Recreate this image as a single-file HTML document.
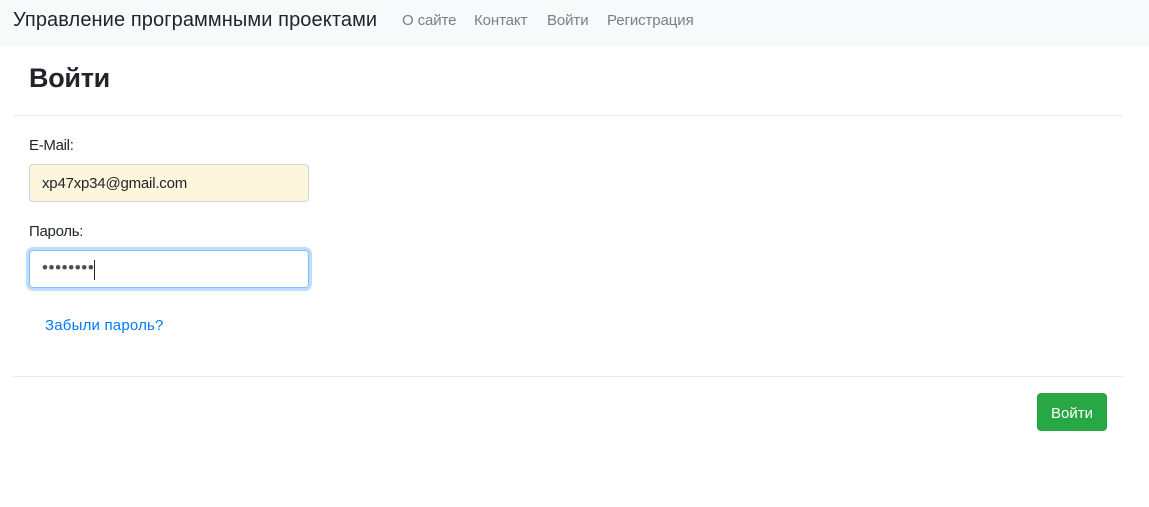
<!DOCTYPE html>
<html><head><meta charset="utf-8"><style>
body{margin:0;width:1149px;height:507px;background:#fff;font-family:"Liberation Sans","DejaVu Sans",sans-serif;position:relative;overflow:hidden;color:#212529}
.nav{position:absolute;left:0;top:0;width:1149px;height:46px;background:#f8f9fa}
.t{position:absolute;white-space:nowrap}
.brand{left:13px;top:9px;font-size:20px;letter-spacing:0.1px;color:#212529}
.nl{top:12px;font-size:15px;color:#7a7f84;letter-spacing:-0.1px}
.hr{position:absolute;left:13px;width:1110px;height:1px;background:#e9ecef}
.in{position:absolute;left:29px;width:278px;height:36px;border:1px solid #ced4da;border-radius:4px;box-sizing:border-box}
</style></head><body>
<div class="nav"></div>
<div class="t brand">Управление программными проектами</div>
<div class="t nl" style="left:402px">О сайте</div>
<div class="t nl" style="left:474px">Контакт</div>
<div class="t nl" style="left:547px">Войти</div>
<div class="t nl" style="left:607px">Регистрация</div>
<div class="t" style="left:29px;top:63px;font-size:27px;font-weight:600;letter-spacing:-0.3px">Войти</div>
<div class="hr" style="top:115px"></div>
<div class="t" style="left:29px;top:137px;font-size:15px;letter-spacing:-0.3px">E-Mail:</div>
<div class="in" style="top:164px;background:#fdf6dd;width:280px;height:38px"></div>
<div class="t" style="left:42px;top:175px;font-size:15px;letter-spacing:-0.2px">xp47xp34@gmail.com</div>
<div class="t" style="left:29px;top:223px;font-size:15px;letter-spacing:-0.3px">Пароль:</div>
<div class="in" style="top:250px;width:280px;height:38px;border:1px solid #80bdff;box-shadow:0 0 0 3px rgba(0,123,255,.25)"></div>
<div class="t" style="left:42px;top:258px;font-size:17px;color:#495057;letter-spacing:0.6px">••••••••</div>
<div style="position:absolute;left:94px;top:260px;width:1px;height:20px;background:#222"></div>
<div class="t" style="left:45px;top:317px;font-size:15px;color:#007bff;letter-spacing:0.2px">Забыли пароль?</div>
<div class="hr" style="top:376px"></div>
<div style="position:absolute;left:1037px;top:393px;width:70px;height:38px;background:#28a745;border-radius:4px;color:#fff;font-size:15px;line-height:41px;text-align:center">Войти</div>
</body></html>
